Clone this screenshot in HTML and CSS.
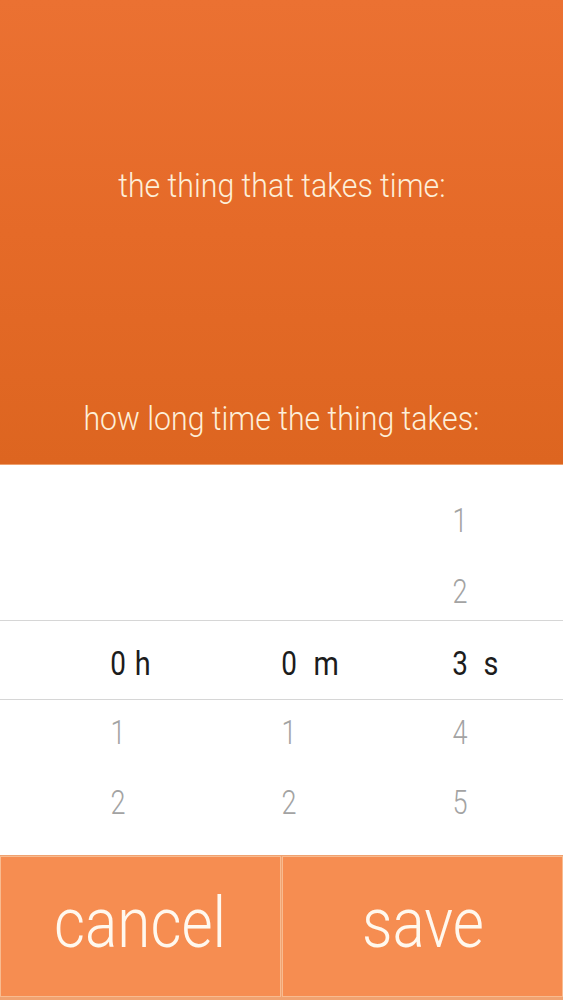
FILE: index.html
```html
<!DOCTYPE html>
<html>
<head>
<meta charset="utf-8">
<link rel="stylesheet" href="styles.css">
</head>
<body>
<div class="app">
  <header class="header">
    <div class="label label-top">the thing that takes time:</div>
    <div class="label label-bottom">how long time the thing takes:</div>
  </header>
  <section class="picker">
    <div class="band"></div>
    <div class="row">
      <div class="cell"><span class="num"></span><span class="unit"></span></div>
      <div class="cell"><span class="num"></span><span class="unit"></span></div>
      <div class="cell"><span class="num">1</span><span class="unit"></span></div>
    </div>
    <div class="row">
      <div class="cell"><span class="num"></span><span class="unit"></span></div>
      <div class="cell"><span class="num"></span><span class="unit"></span></div>
      <div class="cell"><span class="num">2</span><span class="unit"></span></div>
    </div>
    <div class="row row-sel">
      <div class="cell"><span class="num">0</span><span class="unit u-h">h</span></div>
      <div class="cell"><span class="num">0</span><span class="unit u-m">m</span></div>
      <div class="cell"><span class="num">3</span><span class="unit u-s">s</span></div>
    </div>
    <div class="row">
      <div class="cell"><span class="num">1</span><span class="unit"></span></div>
      <div class="cell"><span class="num">1</span><span class="unit"></span></div>
      <div class="cell"><span class="num">4</span><span class="unit"></span></div>
    </div>
    <div class="row">
      <div class="cell"><span class="num">2</span><span class="unit"></span></div>
      <div class="cell"><span class="num">2</span><span class="unit"></span></div>
      <div class="cell"><span class="num">5</span><span class="unit"></span></div>
    </div>
  </section>
  <footer class="buttons">
    <button class="btn"><span class="btn-text">cancel</span></button>
    <button class="btn"><span class="btn-text">save</span></button>
  </footer>
</div>
</body>
</html>
```
FILE: styles.css
```css
html, body {
  margin: 0;
  padding: 0;
  background: #ffffff;
}
.app {
  width: 563px;
  height: 1000px;
  display: flex;
  flex-direction: column;
  font-family: Roboto, "Liberation Sans", sans-serif;
  overflow: hidden;
}
.header {
  flex: none;
  height: 465px;
  box-sizing: border-box;
  background: linear-gradient(180deg, #eb7132 0%, #e56a28 50%, #dd6520 100%);
  border-bottom: 1px solid #eea06e;
  display: flex;
  flex-direction: column;
  align-items: center;
  color: #fdefd9;
  font-weight: 300;
  font-size: 34px;
}
.label {
  line-height: 40px;
  white-space: nowrap;
  transform: scaleX(0.89);
}
.label-top {
  margin-top: 165px;
}
.label-bottom {
  margin-top: 193px;
}
.picker {
  flex: none;
  position: relative;
  height: 390px;
  padding-top: 21px;
  box-sizing: border-box;
  background: #ffffff;
}
.band {
  position: absolute;
  left: 0;
  right: 0;
  top: 155px;
  height: 78px;
  border-top: 1.5px solid #d6d6d6;
  border-bottom: 1.5px solid #d6d6d6;
}
.row {
  height: 70.5px;
  display: grid;
  grid-template-columns: 171px 171px 171px;
  padding-left: 32.5px;
  align-items: center;
}
.cell {
  display: grid;
  grid-template-columns: 1fr 20px 1fr;
  align-items: center;
  font-size: 33px;
  font-weight: 300;
  color: #a3a3a3;
  line-height: 40px;
}
.num {
  grid-column: 2;
  text-align: center;
  transform: scaleX(0.82);
}
.unit {
  grid-column: 3;
  justify-self: start;
  transform: scaleX(0.85);
  transform-origin: left center;
}
.row-sel .cell {
  color: #1c1c1c;
  font-weight: 400;
  font-size: 34px;
  position: relative;
  top: 1px;
}
.u-h { padding-left: 8px; }
.u-m { padding-left: 17px; }
.u-s { padding-left: 16px; }
.buttons {
  flex: none;
  box-sizing: border-box;
  height: 145px;
  display: flex;
  gap: 1px;
  background: #f0a270;
  padding: 1px 0 3px 0;
}
.btn {
  flex: 1;
  margin: 0;
  background: #f68d51;
  border: 1px solid #f8bb90;
  color: #fff8ee;
  font-family: Roboto, "Liberation Sans", sans-serif;
  font-weight: 300;
  font-size: 70px;
  padding: 0 0 8px 0;
  display: flex;
  align-items: center;
  justify-content: center;
}
.btn-text {
  display: inline-block;
  transform: scaleX(0.86);
}
```
